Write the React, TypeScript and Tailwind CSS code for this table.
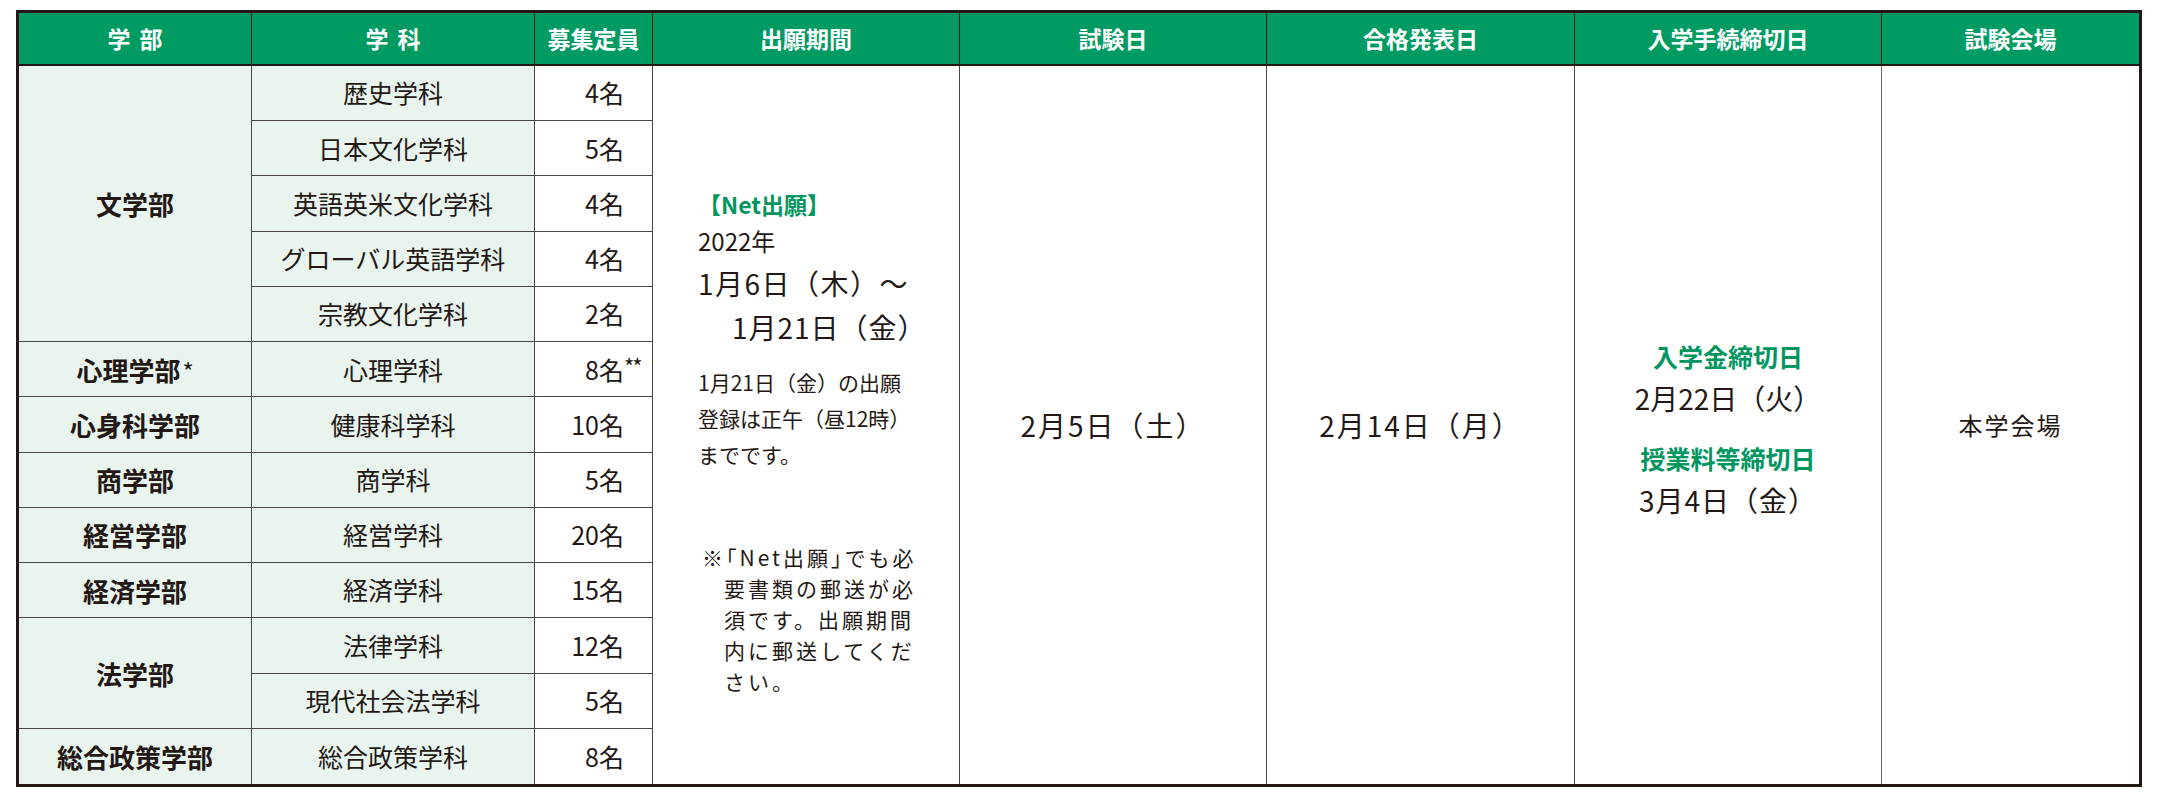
import React from "react";

type Dept = { name: string; cap: string; sup?: string };
type Faculty = { name: string; star?: boolean; depts: Dept[] };

const faculties: Faculty[] = [
  {
    name: "文学部",
    depts: [
      { name: "歴史学科", cap: "4名" },
      { name: "日本文化学科", cap: "5名" },
      { name: "英語英米文化学科", cap: "4名" },
      { name: "グローバル英語学科", cap: "4名" },
      { name: "宗教文化学科", cap: "2名" },
    ],
  },
  { name: "心理学部", star: true, depts: [{ name: "心理学科", cap: "8名", sup: "**" }] },
  { name: "心身科学部", depts: [{ name: "健康科学科", cap: "10名" }] },
  { name: "商学部", depts: [{ name: "商学科", cap: "5名" }] },
  { name: "経営学部", depts: [{ name: "経営学科", cap: "20名" }] },
  { name: "経済学部", depts: [{ name: "経済学科", cap: "15名" }] },
  {
    name: "法学部",
    depts: [
      { name: "法律学科", cap: "12名" },
      { name: "現代社会法学科", cap: "5名" },
    ],
  },
  { name: "総合政策学部", depts: [{ name: "総合政策学科", cap: "8名" }] },
];

const spanClass: Record<number, string> = {
  1: "row-span-1",
  2: "row-span-2",
  5: "row-span-5",
};

const line = "border-[#4a4545]";

function HeaderCell({ children, last }: { children: React.ReactNode; last?: boolean }) {
  return (
    <div
      className={
        "flex items-center justify-center bg-[#009a63] text-white text-[23px] font-bold border-b-2 border-b-[#231815] " +
        (last ? "" : "border-r border-r-[#231815]")
      }
    >
      {children}
    </div>
  );
}

function Bracket({ children }: { children: React.ReactNode }) {
  return <span className="[font-feature-settings:'halt']">{children}</span>;
}

export default function App() {
  const cells: React.ReactNode[] = [];

  cells.push(
    <HeaderCell key="h1">
      <span className="flex gap-[9px]">
        <span>学</span>
        <span>部</span>
      </span>
    </HeaderCell>,
    <HeaderCell key="h2">
      <span className="flex gap-[9px]">
        <span>学</span>
        <span>科</span>
      </span>
    </HeaderCell>,
    <HeaderCell key="h3">募集定員</HeaderCell>,
    <HeaderCell key="h4">出願期間</HeaderCell>,
    <HeaderCell key="h5">試験日</HeaderCell>,
    <HeaderCell key="h6">合格発表日</HeaderCell>,
    <HeaderCell key="h7">入学手続締切日</HeaderCell>,
    <HeaderCell key="h8" last>
      試験会場
    </HeaderCell>
  );

  const bigCells = [
    <div key="b1" className={"row-span-13 border-r " + line + " pl-[45px] pt-[122px] text-[#231815]"}>
      <div className="h-[32px] leading-[32px] text-[23px] font-bold text-[#00965f] whitespace-nowrap">
        【Net出願】
      </div>
      <div className="mt-[3px] h-[36px] leading-[36px] text-[24px]">2022年</div>
      <div className="mt-[4px] h-[40px] leading-[40px] text-[28px] tracking-[1.5px] whitespace-nowrap">1月6日（木）～</div>
      <div className="mt-[4px] h-[40px] leading-[40px] text-[28px] tracking-[1px] pl-[34px] whitespace-nowrap">1月21日（金）</div>
      <div className="mt-[17px] text-[21px] leading-[36px] whitespace-nowrap">
        <div>1月21日（金）の出願</div>
        <div>登録は正午（昼12時）</div>
        <div>までです。</div>
      </div>
      <div className="mt-[70px] ml-[4px] text-[21px] leading-[31px] tracking-[3px] whitespace-nowrap">
        <div>
          ※<Bracket>「</Bracket>Net出願<Bracket>」</Bracket>でも必
        </div>
        <div className="pl-[22px]">要書類の郵送が必</div>
        <div className="pl-[22px]">須です。出願期間</div>
        <div className="pl-[22px]">内に郵送してくだ</div>
        <div className="pl-[22px]">さい。</div>
      </div>
    </div>,
    <div key="b2" className={"row-span-13 border-r " + line + " flex items-center justify-center text-[28px] tracking-[2px] text-[#231815]"}>
      2月5日（土）
    </div>,
    <div key="b3" className={"row-span-13 border-r " + line + " flex items-center justify-center text-[28px] tracking-[2px] text-[#231815]"}>
      2月14日（月）
    </div>,
    <div key="b4" className={"row-span-13 border-r border-r-[#6b6766] flex flex-col items-center justify-center pt-[12px] text-[#231815]"}>
      <div className="h-[32px] leading-[32px] text-[25px] font-bold text-[#00965f]">入学金締切日</div>
      <div className="mt-[4px] h-[44px] leading-[44px] text-[28px]">2月22日（火）</div>
      <div className="mt-[22px] h-[32px] leading-[32px] text-[25px] font-bold text-[#00965f]">授業料等締切日</div>
      <div className="mt-[4px] h-[44px] leading-[44px] text-[28px] tracking-[1px]">3月4日（金）</div>
    </div>,
    <div key="b5" className="row-span-13 flex items-center justify-center text-[24px] tracking-[2px] text-[#231815]">
      本学会場
    </div>,
  ];

  const totalDepts = faculties.reduce((a, f) => a + f.depts.length, 0);
  let deptIndex = 0;

  faculties.forEach((f, fi) => {
    const lastFac = fi === faculties.length - 1;
    cells.push(
      <div
        key={"f" + fi}
        className={
          spanClass[f.depts.length] +
          " flex items-center justify-center bg-[#e9f4ee] border-r text-[26px] font-bold text-[#231815] " +
          line +
          (lastFac ? "" : " border-b")
        }
      >
        <span>
          {f.name}
          {f.star && <span className="ml-[2px] text-[24px] font-normal">*</span>}
        </span>
      </div>
    );
    f.depts.forEach((d, di) => {
      const lastRow = deptIndex === totalDepts - 1;
      cells.push(
        <div
          key={"d" + fi + "-" + di}
          className={
            "flex items-center justify-center bg-[#e9f4ee] border-r text-[25px] text-[#231815] " +
            line +
            (lastRow ? "" : " border-b")
          }
        >
          {d.name}
        </div>,
        <div
          key={"c" + fi + "-" + di}
          className={
            "flex items-center justify-end pr-[28px] bg-white border-r text-[25px] text-[#231815] " +
            line +
            (lastRow ? "" : " border-b")
          }
        >
          <span className="relative">
            {d.cap}
            {d.sup && (
              <span className="absolute left-full top-[3px] text-[22px] leading-none tracking-[-2px]">{d.sup}</span>
            )}
          </span>
        </div>
      );
      if (deptIndex === 0) {
        cells.push(...bigCells);
      }
      deptIndex++;
    });
  });

  return (
    <div className="w-[2157px] h-[797px] bg-white pt-[10px] pl-[16px] font-['Noto_Sans_CJK_JP',sans-serif]">
      <div className="grid w-[2126px] h-[777px] border-[3px] border-[#231815] bg-white grid-cols-[233px_283px_118px_307px_307px_308px_307px_257px] grid-rows-[53px_repeat(13,minmax(0,1fr))]">
        {cells}
      </div>
    </div>
  );
}
